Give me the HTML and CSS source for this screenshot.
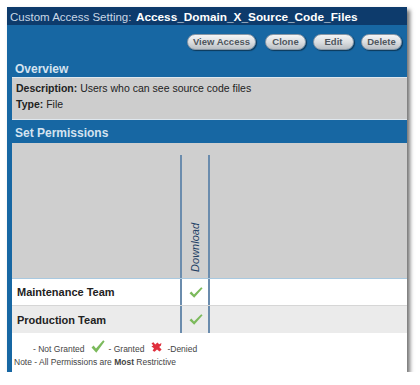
FILE: index.html
```html
<!DOCTYPE html>
<html>
<head>
<meta charset="utf-8">
<link rel="stylesheet" href="styles.css">
</head>
<body>
<div class="panel">
  <div class="titlebar"><span class="label">Custom Access Setting:</span> <span class="name">Access_Domain_X_Source_Code_Files</span></div>
  <div class="actions">
    <button class="btn">View Access</button>
    <button class="btn">Clone</button>
    <button class="btn">Edit</button>
    <button class="btn">Delete</button>
  </div>
  <div class="section-head">Overview</div>
  <div class="overview">
    <div class="line"><b>Description:</b> Users who can see source code files</div>
    <div class="line"><b>Type:</b> File</div>
  </div>
  <div class="section-head perms">Set Permissions</div>
  <div class="grid-wrap">
    <div class="row head">
      <div class="cell name"></div>
      <div class="cell col"><span class="vert">Download</span></div>
      <div class="cell rest"></div>
    </div>
    <div class="row odd">
      <div class="cell name">Maintenance Team</div>
      <div class="cell col"><svg class="check" viewBox="0 0 14 11" width="14" height="11"><path d="M0.5 6.2 L2.4 4.6 L5 7.4 L12.2 0.3 L13.6 1.3 L5.2 10.8 Z" fill="#7cba5c"/></svg></div>
      <div class="cell rest"></div>
    </div>
    <div class="row even">
      <div class="cell name">Production Team</div>
      <div class="cell col"><svg class="check" viewBox="0 0 14 11" width="14" height="11"><path d="M0.5 6.2 L2.4 4.6 L5 7.4 L12.2 0.3 L13.6 1.3 L5.2 10.8 Z" fill="#7cba5c"/></svg></div>
      <div class="cell rest"></div>
    </div>
    <div class="legend">
      <div class="legend-line">
        <span>- Not Granted</span>
        <svg class="lg-check" viewBox="0 0 14 13" width="14" height="13"><path d="M0.5 7.4 L2.6 5.6 L5 8.6 L12.2 0.3 L13.6 1.4 L5.3 12.8 Z" fill="#7cba5c"/></svg>
        <span>- Granted</span>
        <svg class="lg-x" viewBox="0 0 11 10" width="11" height="10"><path d="M0.5 1.2 L2.5 0.3 L4.2 2.6 L6.4 0.6 L8.2 2.2 L10.4 1 L10 3.4 L8.2 5 L10.6 7.6 L8.6 9.6 L6 7.6 L3.6 9.8 L1.6 8.8 L3 6.2 L0.4 4.6 L2.2 3.4 Z" fill="#e0303e"/></svg>
        <span>-Denied</span>
      </div>
      <div class="note">Note - All Permissions are <b>Most</b> Restrictive</div>
    </div>
  </div>
</div>
</body>
</html>
```

FILE: styles.css
```css
* { box-sizing: border-box; }
body {
  margin: 0;
  background: #ffffff;
  font-family: "Liberation Sans", Arial, sans-serif;
}
.panel {
  margin: 7px 0 0 7px;
  width: 400px;
  background: #1767a3;
  box-shadow: 3px 3px 4px rgba(0, 0, 0, 0.55);
}
.titlebar {
  height: 18px;
  line-height: 18px;
  padding-left: 3px;
  background: #0d3b6c;
  white-space: nowrap;
}
.titlebar .label {
  font-size: 11.5px;
  color: #c9d7e6;
}
.titlebar .name {
  font-size: 11.8px;
  font-weight: bold;
  color: #ffffff;
}
.actions {
  height: 33px;
  display: flex;
  justify-content: flex-end;
  align-items: flex-start;
  gap: 7px;
  padding: 9px 5px 0 0;
}
.btn {
  height: 16px;
  min-width: 41px;
  padding: 0 5px;
  border: 1px solid #8a98a6;
  border-radius: 8px;
  background: linear-gradient(#f4f5f6, #d9dcdf 55%, #b9bec3);
  box-shadow: 1px 1px 1px rgba(0, 0, 0, 0.45);
  font-family: "Liberation Sans", Arial, sans-serif;
  font-size: 9.5px;
  font-weight: bold;
  color: #4f565d;
  line-height: 14px;
}
.btn:first-child { margin-right: 2px; }
.section-head {
  height: 19px;
  padding: 3px 0 0 8px;
  font-size: 12px;
  font-weight: bold;
  line-height: 16px;
  color: #d4e3f0;
}
.section-head.perms {
  height: 23px;
  padding-top: 5px;
}
.overview {
  margin-left: 5px;
  height: 43px;
  background: #cdcdcd;
  border-top: 1px solid #dfe7ee;
  border-bottom: 1px solid #dfe7ee;
  padding: 2px 0 0 4px;
  font-size: 10.5px;
  color: #222;
}
.overview .line {
  height: 16px;
  line-height: 16px;
}
.grid-wrap {
  margin-left: 5px;
  background: #ffffff;
}
.row {
  display: grid;
  grid-template-columns: 168px 30px 1fr;
}
.row.head {
  height: 136px;
  background: #cfcfcf;
  border-bottom: 1px solid #a9c9e0;
}
.row.odd {
  height: 27px;
  background: #ffffff;
  border-bottom: 1px solid #d6d6d6;
}
.row.even {
  height: 27px;
  background: #ebebeb;
}
.cell.name {
  padding-left: 5px;
  display: flex;
  align-items: center;
  font-size: 11px;
  font-weight: bold;
  color: #222;
}
.cell.col {
  border-left: 2px solid #6b8cad;
  border-right: 2px solid #6b8cad;
  display: flex;
  align-items: center;
  justify-content: center;
}
.row.head .cell.col {
  margin-top: 12px;
  align-items: flex-end;
  padding-bottom: 6px;
}
.vert {
  writing-mode: vertical-rl;
  transform: rotate(180deg);
  font-size: 11px;
  font-style: italic;
  color: #1e3f64;
}
.check { display: block; margin-left: 1px; }
.legend {
  height: 39px;
  padding-top: 8px;
  font-size: 8.5px;
  color: #444;
}
.legend-line {
  display: flex;
  align-items: center;
  height: 15px;
  padding-left: 21px;
}
.lg-check { margin: -4px 4px 0 6px; }
.lg-x { margin: -4px 5px 0 7px; }
.note {
  padding-left: 2px;
  line-height: 12px;
}
```
